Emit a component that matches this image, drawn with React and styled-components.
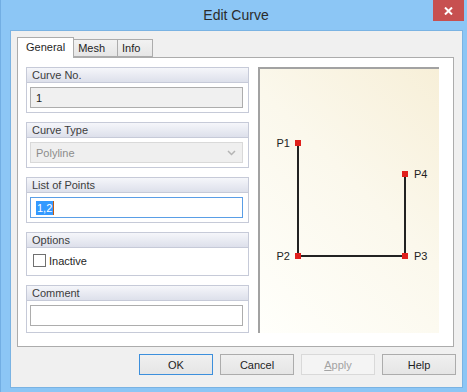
import React from 'react';
import styled, { createGlobalStyle } from 'styled-components';

const GlobalStyle = createGlobalStyle`
  html, body {
    margin: 0;
    padding: 0;
    width: 467px;
    height: 392px;
    overflow: hidden;
  }
  body {
    font-family: "Liberation Sans", Arial, sans-serif;
    font-size: 11px;
    color: #1e1e1e;
  }
`;

const Window = styled.div`
  width: 467px;
  height: 392px;
  box-sizing: border-box;
  background: #8cc6f5;
  border-left: 1px solid #72aee3;
  display: flex;
  flex-direction: column;
`;

const TitleBar = styled.div`
  height: 30px;
  display: grid;
  grid-template-columns: 1fr auto 1fr;
  align-items: start;
`;

const Title = styled.div`
  grid-column: 2;
  font-size: 14px;
  line-height: 30px;
  color: #2b2b2b;
  padding-left: 4px;
`;

const CloseButton = styled.div`
  grid-column: 3;
  justify-self: end;
  margin-right: 3px;
  width: 31px;
  height: 21px;
  background: #c75050;
  display: flex;
  align-items: center;
  justify-content: center;
`;

const Client = styled.div`
  flex: 1;
  margin: 0 4px 4px 9px;
  background: #f0f0f0;
  border: 1px solid #7ab3e3;
  padding: 6px 6px 0 6px;
  display: flex;
  flex-direction: column;
`;

const TabStrip = styled.div`
  display: flex;
  align-items: flex-end;
  height: 20px;
  position: relative;
  z-index: 1;
`;

const Tab = styled.div`
  box-sizing: border-box;
  height: ${(p) => (p.$active ? '21px' : '18px')};
  margin-bottom: ${(p) => (p.$active ? '-1px' : '0')};
  padding: ${(p) => (p.$active ? '2px 8px 0 8px' : '1px 12px 0 4px')};
  border: 1px solid #acacac;
  border-bottom: ${(p) => (p.$active ? 'none' : '1px solid #acacac')};
  margin-left: ${(p) => (p.$first ? '0' : '-1px')};
  background: ${(p) => (p.$active ? '#ffffff' : 'linear-gradient(#f2f2f2, #e6e6e6)')};
  font-size: 11px;
  line-height: 14px;
  color: #1e1e1e;
`;

const TabPanel = styled.div`
  box-sizing: border-box;
  height: 290px;
  margin-right: 2px;
  background: #ffffff;
  border: 1px solid #acacac;
  padding: 9px 14px 13px 8px;
  display: flex;
  gap: 9px;
`;

const GroupColumn = styled.div`
  width: 224px;
  display: flex;
  flex-direction: column;
  gap: 9px;
`;

const Group = styled.div`
  box-sizing: border-box;
  height: ${(p) => p.$height || 46}px;
  border: 1px solid #c6cad8;
  background: #ffffff;
  display: flex;
  flex-direction: column;
`;

const GroupHeader = styled.div`
  height: 15px;
  box-sizing: border-box;
  padding: 1px 0 0 5px;
  background: linear-gradient(#f5f6fa, #dde0eb);
  border-bottom: 1px solid #c6cad8;
  font-size: 11px;
  line-height: 13px;
  color: #3c3c3c;
`;

const GroupBody = styled.div`
  padding: 4px 5px 0 3px;
`;

const TextBox = styled.div`
  box-sizing: border-box;
  height: 21px;
  border: 1px solid ${(p) => (p.$focused ? '#5a9ee6' : '#adadad')};
  background: ${(p) => (p.$readOnly ? '#f0f0f0' : '#ffffff')};
  padding: 0 5px;
  display: flex;
  align-items: center;
  font-size: 11px;
  color: #1e1e1e;
`;

const Selected = styled.span`
  background: #3399ff;
  color: #ffffff;
  line-height: 14px;
  padding: 0 1px;
  border-right: 1px solid #c05a10;
`;

const ComboBox = styled.div`
  box-sizing: border-box;
  height: 21px;
  border: 1px solid #d9d9d9;
  background: #efefef;
  padding: 0 6px 0 5px;
  display: flex;
  align-items: center;
  justify-content: space-between;
  font-size: 11px;
  color: #8c8c8c;
`;

const CheckRow = styled.label`
  display: flex;
  align-items: center;
  gap: 3px;
  padding: 2px 0 0 3px;
  font-size: 11px;
  color: #1e1e1e;
`;

const CheckBox = styled.span`
  box-sizing: border-box;
  width: 13px;
  height: 13px;
  border: 1px solid #707070;
  background: #ffffff;
`;

const Preview = styled.div`
  box-sizing: border-box;
  width: 181px;
  height: 266px;
  border-top: 2px solid #a2a2a2;
  border-left: 2px solid #a2a2a2;
  background: linear-gradient(225deg, #f7efd8 0%, #fbf8ec 45%, #fffffb 100%);
`;

const ButtonRow = styled.div`
  display: flex;
  justify-content: flex-end;
  gap: 7px;
  margin-top: 7px;
`;

const Button = styled.div`
  box-sizing: border-box;
  width: 74px;
  height: 21px;
  display: flex;
  align-items: center;
  justify-content: center;
  font-size: 11px;
  color: ${(p) => (p.$disabled ? '#a3a3a3' : '#1e1e1e')};
  background: ${(p) => (p.$disabled ? '#f4f4f4' : 'linear-gradient(#f0f0f0, #e5e5e5)')};
  border: 1px solid ${(p) => (p.$default ? '#3c8fdc' : p.$disabled ? '#d9d9d9' : '#acacac')};
`;

const Mnemonic = styled.span`
  text-decoration: underline;
`;

const points = [
  { name: 'P1', x: 38, y: 74, side: 'left' },
  { name: 'P2', x: 38, y: 187, side: 'left' },
  { name: 'P3', x: 145, y: 187, side: 'right' },
  { name: 'P4', x: 145, y: 105, side: 'right' },
];

const CurveDrawing = () => (
  <svg width="179" height="264" viewBox="0 0 179 264">
    <polyline
      points={points.map((p) => `${p.x},${p.y}`).join(' ')}
      fill="none"
      stroke="#222"
      strokeWidth="2"
    />
    {points.map((p) => (
      <g key={p.name}>
        <rect x={p.x - 3} y={p.y - 3} width="6" height="6" fill="#e0201c" />
        <text
          x={p.side === 'left' ? p.x - 8 : p.x + 9}
          y={p.y + 4}
          textAnchor={p.side === 'left' ? 'end' : 'start'}
          fontFamily="Liberation Sans, Arial, sans-serif"
          fontSize="11"
          fill="#222"
        >
          {p.name}
        </text>
      </g>
    ))}
  </svg>
);

export default function App() {
  return (
    <>
      <GlobalStyle />
      <Window>
        <TitleBar>
          <Title>Edit Curve</Title>
          <CloseButton>
            <svg width="9" height="8" viewBox="0 0 9 8">
              <path d="M1 0.5 L8 7.5 M8 0.5 L1 7.5" stroke="#fff" strokeWidth="2" />
            </svg>
          </CloseButton>
        </TitleBar>
        <Client>
          <TabStrip>
            <Tab $active $first>General</Tab>
            <Tab>Mesh</Tab>
            <Tab>Info</Tab>
          </TabStrip>
          <TabPanel>
            <GroupColumn>
              <Group>
                <GroupHeader>Curve No.</GroupHeader>
                <GroupBody>
                  <TextBox $readOnly>1</TextBox>
                </GroupBody>
              </Group>
              <Group>
                <GroupHeader>Curve Type</GroupHeader>
                <GroupBody>
                  <ComboBox>
                    Polyline
                    <svg width="9" height="6" viewBox="0 0 9 6">
                      <path d="M1 1 L4.5 4.5 L8 1" fill="none" stroke="#b4b4b4" strokeWidth="1.5" />
                    </svg>
                  </ComboBox>
                </GroupBody>
              </Group>
              <Group>
                <GroupHeader>List of Points</GroupHeader>
                <GroupBody>
                  <TextBox $focused>
                    <Selected>1,2</Selected>
                  </TextBox>
                </GroupBody>
              </Group>
              <Group $height={44}>
                <GroupHeader>Options</GroupHeader>
                <GroupBody>
                  <CheckRow>
                    <CheckBox />
                    Inactive
                  </CheckRow>
                </GroupBody>
              </Group>
              <Group $height={48}>
                <GroupHeader>Comment</GroupHeader>
                <GroupBody>
                  <TextBox />
                </GroupBody>
              </Group>
            </GroupColumn>
            <Preview>
              <CurveDrawing />
            </Preview>
          </TabPanel>
          <ButtonRow>
            <Button $default>OK</Button>
            <Button>Cancel</Button>
            <Button $disabled>
              <Mnemonic>A</Mnemonic>pply
            </Button>
            <Button>Help</Button>
          </ButtonRow>
        </Client>
      </Window>
    </>
  );
}
